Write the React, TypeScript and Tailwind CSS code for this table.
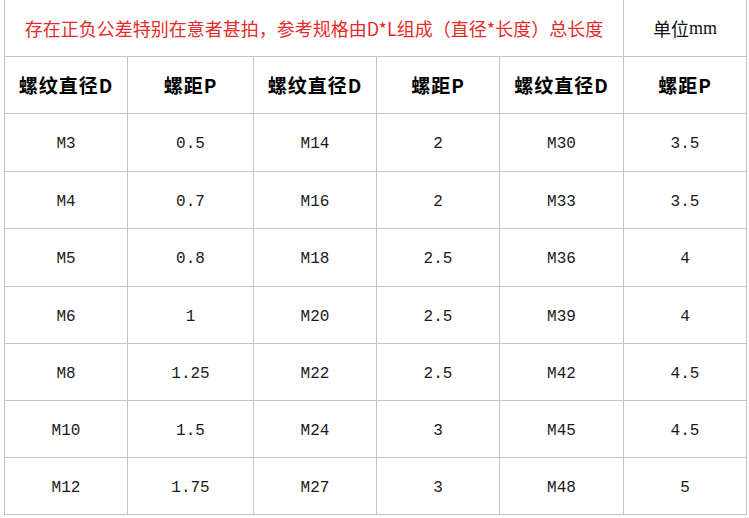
import React from 'react';

const rows: string[][] = [
  ['M3', '0.5', 'M14', '2', 'M30', '3.5'],
  ['M4', '0.7', 'M16', '2', 'M33', '3.5'],
  ['M5', '0.8', 'M18', '2.5', 'M36', '4'],
  ['M6', '1', 'M20', '2.5', 'M39', '4'],
  ['M8', '1.25', 'M22', '2.5', 'M42', '4.5'],
  ['M10', '1.5', 'M24', '3', 'M45', '4.5'],
  ['M12', '1.75', 'M27', '3', 'M48', '5'],
];

const headers = ['螺纹直径D', '螺距P', '螺纹直径D', '螺距P', '螺纹直径D', '螺距P'];

const rowHeights = ['h-[57px]', 'h-[56px]', 'h-[57px]', 'h-[56px]', 'h-[56px]', 'h-[56px]', 'h-[56px]'];

const App: React.FC = () => {
  return (
    <div className="w-[749px] h-[518px] bg-white overflow-hidden">
      <div className="ml-[4px] w-[743px] grid grid-cols-[122px_125px_122px_122px_123px_122px] gap-px bg-[#c4c4c4] px-px pb-px">
        {/* title row */}
        <div className="col-span-5 h-[56px] bg-white flex items-center justify-center text-[18px] text-[#e62a2a] font-['Noto_Sans_CJK_SC',sans-serif]">
          存在正负公差特别在意者甚拍，参考规格由D*L组成（直径*长度）总长度
        </div>
        <div className="h-[56px] bg-white flex items-center justify-center text-[18px] text-[#111] font-['Noto_Sans_CJK_SC',sans-serif]">
          单位<span className="font-['Liberation_Serif',serif]">mm</span>
        </div>

        {/* header row */}
        {headers.map((h, i) => (
          <div
            key={i}
            className="h-[56px] bg-white flex items-center justify-center text-[19px] font-bold text-black tracking-[1px] font-['Noto_Sans_CJK_SC',sans-serif]"
          >
            {h}
          </div>
        ))}

        {/* data rows */}
        {rows.map((r, ri) =>
          r.map((c, ci) => (
            <div
              key={`${ri}-${ci}`}
              className={`${rowHeights[ri]} bg-white flex items-center justify-center pt-[3px] text-[16px] text-[#1a1a1a] font-['Liberation_Mono',monospace]`}
            >
              {c}
            </div>
          ))
        )}
      </div>
    </div>
  );
};

export default App;
